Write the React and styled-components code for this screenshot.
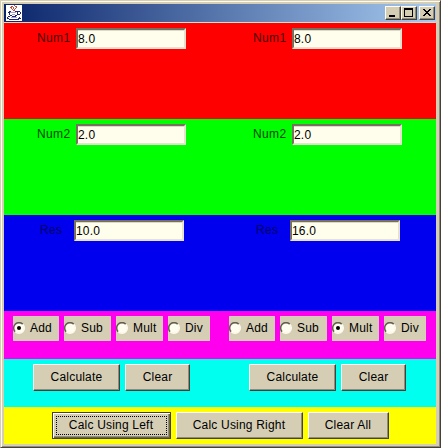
import React from 'react';
import styled, { createGlobalStyle, css } from 'styled-components';

const GlobalStyle = createGlobalStyle`
  body { margin: 0; overflow: hidden; }
  *, *::before, *::after { box-sizing: border-box; }
  button, input { font: inherit; color: inherit; letter-spacing: inherit; margin: 0; outline: none; }
`;

const Window = styled.main`
  display: flex;
  flex-direction: column;
  width: 441px;
  height: 448px;
  padding: 2px 2px 1px 1px;
  background: #d5ceb5;
  border: 1px solid;
  border-color: #d5ceb5 #44413a #44413a #d5ceb5;
  box-shadow: inset 1px 1px #fffbee, inset -1px -1px #918b7c;
  font: 12px/15px "Liberation Sans", Arial, sans-serif;
  letter-spacing: 0.2px;
  color: #000;
`;

const TitleBar = styled.header`
  display: flex;
  align-items: center;
  flex: 0 0 18px;
  height: 18px;
  margin: 1px 2px 0;
  padding-right: 1px;
  background: linear-gradient(90deg, #0a246a, #a6caf0);
`;

const JavaIcon = styled.svg`
  width: 16px;
  height: 16px;
  margin: 0 auto 0 2px;
`;

const Control = styled.button`
  width: 16px;
  height: 14px;
  padding: 0;
  margin-left: ${(p) => (p.$gap ? '2px' : 0)};
  background: #d5ceb5;
  border: 1px solid;
  border-color: #fffbee #44413a #44413a #fffbee;
  box-shadow: inset -1px -1px #918b7c;
  svg { display: block; width: 14px; height: 12px; }
`;

const Content = styled.div`
  flex: 1;
  display: grid;
  grid-template-rows: 96px 96px 96px 48px 48px 37px;
  margin: 1px 3px 0 2px;
  box-shadow: 0 -1px #e5dfcd;
`;

const Band = styled.section`
  display: grid;
  grid-template-columns: ${(p) => (p.$single ? '1fr' : '216px 216px')};
  background: ${(p) => p.$color};
`;

const Cell = styled.div`
  display: flex;
  align-items: flex-start;
  justify-content: center;
  gap: 5px;
  padding-top: 5px;
`;

const ActionCell = styled(Cell)`
  justify-content: flex-start;
  padding-left: 29px;
`;

const FieldCell = styled(Cell)`
  justify-content: flex-start;
  gap: 0;
  padding-left: ${(p) => (p.$result ? '36px' : '33px')};
`;

const Label = styled.label`
  width: ${(p) => (p.$result ? '34px' : '39px')};
  padding-top: 3px;
  letter-spacing: 0.35px;
  color: ${(p) => p.$ink};
`;

const Field = styled.input`
  width: 110px;
  height: 21px;
  padding: 0;
  background: #fffdec;
  border: 2px solid;
  border-color: #77705f #e7e1d1 #e7e1d1 #77705f;
  border-radius: 0;
  box-shadow: inset 0 1px #55504a33;
`;

const Choice = styled.label`
  display: flex;
  align-items: center;
  width: ${(p) => p.$width}px;
  height: 25px;
  background: #d5ceb5;
  svg { flex: none; width: 13px; height: 13px; margin-right: 4px; }
`;

const ChoiceCell = styled(Cell)`
  justify-content: flex-start;
  padding-left: 9px;
`;

const focused = css`
  border-color: #44413a;
  box-shadow: inset 1px 1px #fffbee, inset -1px -1px #68634f, inset -2px -2px #918b7c;
  &::after {
    content: '';
    position: absolute;
    inset: 3px;
    border: 1px dotted #000;
  }
`;

const PushButton = styled.button`
  position: relative;
  width: ${(p) => p.$width}px;
  height: 27px;
  padding: 0;
  background: #d5ceb5;
  border: 1px solid;
  border-color: #fffbee #44413a #44413a #fffbee;
  box-shadow: inset -1px -1px #918b7c;
  white-space: nowrap;
  ${(p) => p.$focused && focused}
`;

function JavaCup() {
  return (
    <JavaIcon viewBox="0 0 16 16" shapeRendering="crispEdges">
      <path fill="#fff" d="M0 0h16v16H0z" />
      <path fill="none" stroke="#c8503a" d="M8 .5h1M5 1.5h2M9 1.5h2M4 2.5h2M7 2.5h1M10 2.5h1M5 3.5h1M7 3.5h1M9 3.5h1M6 4.5h1M8 4.5h1M7 5.5h2" />
      <path fill="none" stroke="#24236f" d="M3 6.5h2M9 6.5h5M2 7.5h2M11 7.5h1M14 7.5h1M3 8.5h1M11 8.5h1M14 8.5h1M3 9.5h1M11 9.5h3M4 10.5h2M9 10.5h2M2 11.5h2M6 11.5h4M1 12.5h1M13 12.5h1M1 13.5h2M12 13.5h3M3 14.5h10" />
      <path fill="none" stroke="#aaa5d1" d="M4 7.5h6M6 9.5h3M5 12.5h6" />
    </JavaIcon>
  );
}

function Radio({ checked }) {
  return (
    <svg viewBox="0 0 13 13">
      <circle cx="6" cy="6" r="5" fill="#fffdf0" />
      <path d="M2.2 9.8A5.3 5.3 0 0 1 9.8 2.2" fill="none" stroke="#625d51" strokeWidth="1.5" />
      <path d="M9.8 2.2A5.3 5.3 0 0 1 2.2 9.8" fill="none" stroke="#fffbee" strokeWidth="1.3" />
      {checked && <circle cx="6" cy="6" r="2" fill="#000" />}
    </svg>
  );
}

function FieldRow({ label, values, color, ink, result }) {
  return (
    <Band $color={color}>
      {values.map((value, i) => (
        <FieldCell key={i} $result={result}>
          <Label $ink={ink} $result={result} htmlFor={`${label}-${i}`}>{label}</Label>
          <Field id={`${label}-${i}`} defaultValue={value} />
        </FieldCell>
      ))}
    </Band>
  );
}

const operations = [['Add', 46], ['Sub', 47], ['Mult', 47], ['Div', 42]];

export default function App() {
  return (
    <>
      <GlobalStyle />
      <Window>
        <TitleBar>
          <JavaCup />
          <Control aria-label="Minimize"><svg viewBox="0 0 14 12"><path d="M3 8h6v2H3z" /></svg></Control>
          <Control aria-label="Maximize"><svg viewBox="0 0 14 12" shapeRendering="crispEdges"><path fillRule="evenodd" d="M2 1h9v9H2zM3 3v6h7V3z" /></svg></Control>
          <Control $gap aria-label="Close"><svg viewBox="0 0 14 12" shapeRendering="crispEdges"><path d="M3 2h2v1h1v1h2V3h1V2h2v1h-1v1H9v1H8v1h1v1h1v1h1v1H9V8H8V7H6v1H5v1H3V8h1V7h1V6h1V5H5V4H4V3H3z" /></svg></Control>
        </TitleBar>
        <Content>
          <FieldRow label="Num1" values={['8.0', '8.0']} color="#ff0000" ink="#480000" />
          <FieldRow label="Num2" values={['2.0', '2.0']} color="#00ff00" ink="#004800" />
          <FieldRow label="Res" values={['10.0', '16.0']} color="#0000ee" ink="#000064" result />
          <Band $color="#ff00ee">
            {['Add', 'Mult'].map((selected) => (
              <ChoiceCell key={selected}>
                {operations.map(([name, width]) => (
                  <Choice key={name} $width={width}><Radio checked={name === selected} />{name}</Choice>
                ))}
              </ChoiceCell>
            ))}
          </Band>
          <Band $color="#00ffee">
            {['left', 'right'].map((side) => (
              <ActionCell key={side}>
                <PushButton $width={87}>Calculate</PushButton>
                <PushButton $width={65}>Clear</PushButton>
              </ActionCell>
            ))}
          </Band>
          <Band $color="#ffff00" $single>
            <Cell>
              <PushButton $width={119} $focused>Calc Using Left</PushButton>
              <PushButton $width={127}>Calc Using Right</PushButton>
              <PushButton $width={81}>Clear All</PushButton>
            </Cell>
          </Band>
        </Content>
      </Window>
    </>
  );
}
